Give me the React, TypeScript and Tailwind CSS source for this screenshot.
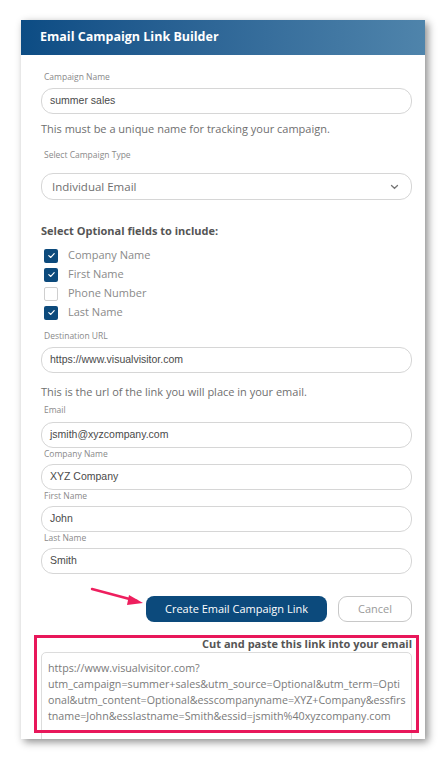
import React from "react";

const MF = { fontFamily: '"Open Sans", "Noto Sans", sans-serif' };
const AF = { fontFamily: '"Liberation Sans", Arial, sans-serif' };

function Label({ children, className = "" }: { children: React.ReactNode; className?: string }) {
  return (
    <div className={`pl-[3px] text-[8.5px] leading-[10px] text-[#8a8a8a] ${className}`} style={MF}>
      {children}
    </div>
  );
}

function Field({ value, className = "" }: { value: string; className?: string }) {
  return (
    <div
      className={`flex h-[26px] items-center rounded-[12px] border border-[#d6d6d6] bg-white pl-[8px] text-[10.5px] text-[#4a4a4a] ${className}`}
      style={AF}
    >
      {value}
    </div>
  );
}

function Check({ checked, label }: { checked: boolean; label: string }) {
  return (
    <div className="flex h-[19px] items-center">
      <div
        className={`ml-[3px] flex h-[14px] w-[14px] items-center justify-center rounded-[2px] ${
          checked ? "bg-[#0c4a7c]" : "border border-[#cfcfcf] bg-white"
        }`}
      >
        {checked && (
          <svg width="9" height="9" viewBox="0 0 10 10">
            <path d="M2 5.2 L4.2 7.2 L8 3" fill="none" stroke="white" strokeWidth="1.3" strokeLinecap="round" strokeLinejoin="round" />
          </svg>
        )}
      </div>
      <span className="ml-[10px] text-[11px] text-[#8a8a8a]" style={MF}>
        {label}
      </span>
    </div>
  );
}

export default function App() {
  const lines = [
    "https://www.visualvisitor.com?",
    "utm_campaign=summer+sales&utm_source=Optional&utm_term=Opti",
    "onal&utm_content=Optional&esscompanyname=XYZ+Company&essfirs",
    "tname=John&esslastname=Smith&essid=jsmith%40xyzcompany.com",
  ];
  return (
    <div className="h-[760px] w-[446px] overflow-hidden bg-white pl-[21px] pt-[20px]">
      <div className="relative h-[719px] w-[404px] overflow-hidden bg-white shadow-[3px_3px_8px_rgba(0,0,0,0.45)]">
        <div className="flex h-[35px] items-center bg-gradient-to-r from-[#0c4c84] to-[#4f84ab] pl-[19px]">
          <span className="text-[12.5px] font-bold text-white" style={MF}>
            Email Campaign Link Builder
          </span>
        </div>
        <div className="pl-[20px] pr-[13px] pt-[17px]">
          <Label>Campaign Name</Label>
          <Field value="summer sales" className="mt-[6px] h-[25px]" />
          <div className="mt-[8px] text-[11px] leading-[14px] text-[#6f6f6f]" style={MF}>
            This must be a unique name for tracking your campaign.
          </div>
          <Label className="mt-[14px]">Select Campaign Type</Label>
          <div
            className="mt-[13px] flex h-[27px] items-center justify-between rounded-[12px] border border-[#d6d6d6] bg-white pl-[10px] pr-[12px]"
          >
            <span className="text-[11.5px] text-[#6f6f6f]" style={MF}>
              Individual Email
            </span>
            <svg width="9" height="6" viewBox="0 0 9 6">
              <path d="M1.5 1.5 L4.5 4.3 L7.5 1.5" fill="none" stroke="#777" strokeWidth="1.3" strokeLinecap="round" />
            </svg>
          </div>
          <div className="mt-[24px] text-[11px] font-bold leading-[14px] text-[#555]" style={MF}>
            Select Optional fields to include:
          </div>
          <div className="mt-[8px]">
            <Check checked label="Company Name" />
            <Check checked label="First Name" />
            <Check checked={false} label="Phone Number" />
            <Check checked label="Last Name" />
          </div>
          <Label className="mt-[9px]">Destination URL</Label>
          <Field value="https://www.visualvisitor.com" className="mt-[6px]" />
          <div className="mt-[12px] text-[11px] leading-[14px] text-[#6f6f6f]" style={MF}>
            This is the url of the link you will place in your email.
          </div>
          <Label className="mt-[6px]">Email</Label>
          <Field value="jsmith@xyzcompany.com" className="mt-[7px] h-[25px]" />
          <Label className="mt-[1px]">Company Name</Label>
          <Field value="XYZ Company" className="mt-[5px]" />
          <Label className="mt-[1px]">First Name</Label>
          <Field value="John" className="mt-[5px]" />
          <Label className="mt-[1px]">Last Name</Label>
          <Field value="Smith" className="mt-[5px] h-[25px]" />
          <div className="mt-[22px] flex justify-end gap-[11px]">
            <div
              className="flex h-[26px] w-[181px] items-center justify-center rounded-[8px] bg-[#0c4a7c] text-[11px] text-white"
              style={MF}
            >
              Create Email Campaign Link
            </div>
            <div
              className="flex h-[26px] w-[74px] items-center justify-center rounded-[9px] border border-[#c8c8c8] bg-white text-[11px] text-[#9a9a9a]"
              style={MF}
            >
              Cancel
            </div>
          </div>
          <div className="mt-[15px] text-right text-[11px] font-bold leading-[14px] text-[#555]" style={MF}>
            Cut and paste this link into your email
          </div>
          <div className="mt-[1px] h-[100px] rounded-[5px] border border-[#dcdcdc] bg-white pl-[6px] pt-[7px]">
            {lines.map((l) => (
              <div key={l} className="whitespace-nowrap text-[10.7px] leading-[16px] text-[#7a7a7a]" style={MF}>
                {l}
              </div>
            ))}
          </div>
        </div>
        <div className="pointer-events-none absolute left-[13px] top-[615px] h-[98px] w-[385px] border-[3px] border-[#e8175a]" />
        <svg className="pointer-events-none absolute left-[68px] top-[565px]" width="60" height="22" viewBox="0 0 60 22">
          <path d="M3 4 L48 16" stroke="#ee1f5e" strokeWidth="2.4" strokeLinecap="round" />
          <path d="M40 10 L54 18 L38 20 Z" fill="#ee1f5e" />
        </svg>
      </div>
    </div>
  );
}
